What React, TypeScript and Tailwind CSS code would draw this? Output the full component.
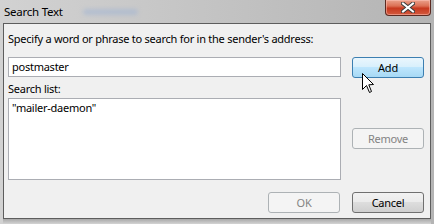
import React from "react";

const font = {
  fontFamily: '"Noto Sans", "Open Sans", sans-serif',
  letterSpacing: "-0.25px",
};

function WinButton({
  children,
  variant = "normal",
}: {
  children: React.ReactNode;
  variant?: "normal" | "hover" | "disabled";
}) {
  const cls =
    variant === "hover"
      ? "border-[#3c7fb1] bg-[linear-gradient(to_bottom,#eaf6fd_0%,#d9f0fc_45%,#bee6fd_50%,#a7d9f5_100%)] text-black"
      : variant === "disabled"
        ? "border-[#adb2b5] bg-[#f4f4f4] text-[#838383]"
        : "border-[#707070] bg-[linear-gradient(to_bottom,#f2f2f2_0%,#ebebeb_45%,#dddddd_50%,#cfcfcf_100%)] text-black";
  return (
    <div
      className={`flex h-[21px] w-[72px] items-center justify-center rounded-[3px] border text-[11px] leading-none ${cls}`}
    >
      {children}
    </div>
  );
}

function Cursor() {
  return (
    <svg
      className="absolute left-[10px] top-[16px]"
      width="13"
      height="21"
      viewBox="0 0 13 21"
    >
      <path
        d="M0.5 0.5 L0.5 16.5 L4.5 12.5 L7.5 19.5 L9.5 18.5 L6.8 11.8 L11.5 11.5 Z"
        fill="#ffffff"
        stroke="#000000"
        strokeWidth="1"
        strokeLinejoin="miter"
      />
    </svg>
  );
}

export default function App() {
  return (
    <div
      style={font}
      className="flex h-[224px] w-[434px] flex-col bg-[linear-gradient(to_right,#d2d2d2,#c6c6c6_40%,#bdbdbd_70%,#b4b4b4)] px-[3px] text-black"
    >
      {/* title bar */}
      <div className="relative flex h-[23px] items-start">
        <span className="pt-[4px] pl-[1px] text-[11.5px] leading-[15px] text-black">
          Search Text
        </span>
        <div className="absolute left-[80px] top-[9px] h-[6px] w-[55px] rounded-full bg-[#9bb1d4] opacity-50 blur-[2px]" />
        <div className="absolute right-0 top-0 flex h-[16px] w-[46px] items-center justify-center rounded-b-[4px] border border-t-0 border-[#5b2a21] bg-[linear-gradient(to_bottom,#eba18c_0%,#dc7055_40%,#c7391f_55%,#d35a3e_100%)] shadow-[inset_0_0_0_1px_rgba(255,200,190,0.5)]">
          <svg width="14" height="11" viewBox="0 0 14 11">
            <path
              d="M2 1.5 L12 9.5 M12 1.5 L2 9.5"
              stroke="#3b3b3b"
              strokeWidth="4"
              strokeLinecap="square"
            />
            <path
              d="M2 1.5 L12 9.5 M12 1.5 L2 9.5"
              stroke="#ffffff"
              strokeWidth="2"
              strokeLinecap="square"
            />
          </svg>
        </div>
      </div>

      {/* client area */}
      <div className="flex h-[196px] flex-col border border-[#5d5d5d] bg-[#f0f0f0] pl-[4px] pr-[6px]">
        <div className="mt-[7px] h-[15px] text-[11px] leading-[15px]">
          Specify a word or phrase to search for in the sender's address:
        </div>

        <div className="mt-[11px] flex">
          <div className="flex w-[333px] flex-col">
            <div className="flex h-[20px] items-center border border-[#abadb3] bg-white pl-[3px] text-[11px]">
              postmaster
            </div>
            <div className="mt-[4px] h-[15px] text-[11px] leading-[15px]">
              Search list:
            </div>
            <div className="mt-[2px] h-[82px] border border-[#abadb3] bg-white pl-[3px] pt-[1px] text-[11px] leading-[15px]">
              "mailer-daemon"
            </div>
          </div>
          <div className="ml-[11px] flex flex-col">
            <div className="relative">
              <WinButton variant="hover">Add</WinButton>
              <Cursor />
            </div>
            <div className="mt-[50px]">
              <WinButton variant="disabled">Remove</WinButton>
            </div>
          </div>
        </div>

        <div className="mt-[12px] flex justify-end gap-[12px]">
          <WinButton variant="disabled">OK</WinButton>
          <WinButton>Cancel</WinButton>
        </div>
      </div>

      <div className="h-[5px] bg-[linear-gradient(to_bottom,#a8a8a8,#d4d4d4)]" />
    </div>
  );
}
